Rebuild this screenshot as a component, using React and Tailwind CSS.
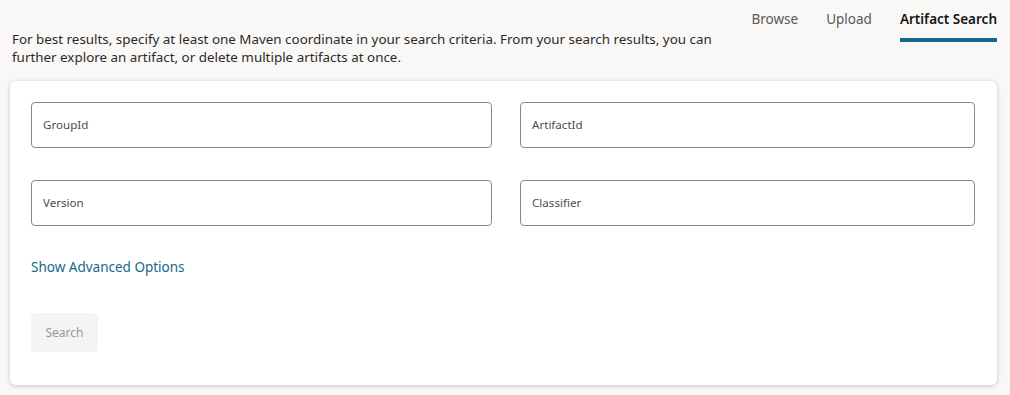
import React from "react";

function Field({ label }) {
  return (
    <div className="h-[46px] rounded-[4px] border border-[#8a8886] bg-white flex items-center px-[11px]">
      <span className="text-[11.6px] text-[#4d4b49]">{label}</span>
    </div>
  );
}

export default function App() {
  return (
    <div className="w-[1010px] h-[395px] bg-[#f9f8f7] overflow-hidden text-[#161513]" style={{ fontFamily: '"Noto Sans", "Open Sans", sans-serif' }}>
      <div className="flex justify-between">
        <p className="pl-[12px] pt-[30px] w-[740px] text-[13.4px] leading-[18px] text-[#2c2a28]">
          For best results, specify at least one Maven coordinate in your search criteria. From your search results, you can further explore an artifact, or delete multiple artifacts at once.
        </p>
        <nav className="flex gap-[28px] pr-[13px] pt-[8px] text-[13.5px]">
          <div className="h-[34px] flex items-start pt-[1px] text-[#5b5955]">Browse</div>
          <div className="h-[34px] flex items-start pt-[1px] text-[#5b5955]">Upload</div>
          <div className="h-[34px] flex flex-col items-stretch">
            <span className="pt-[1px] font-semibold text-[#161513]">Artifact Search</span>
            <span className="mt-auto h-[4px] bg-[#13698d]" />
          </div>
        </nav>
      </div>
      <div className="mx-[10px] mt-[15px] w-[987px] h-[304px] bg-white rounded-[6px] shadow-[0_1px_5px_rgba(0,0,0,0.2)] pl-[21px] pt-[21px]">
        <div className="grid grid-cols-[461px_455px] gap-x-[28px] gap-y-[32px]">
          <Field label="GroupId" />
          <Field label="ArtifactId" />
          <Field label="Version" />
          <Field label="Classifier" />
        </div>
        <div className="mt-[32px] text-[13.5px] text-[#13698d] leading-[19px]">Show Advanced Options</div>
        <button className="mt-[36px] h-[39px] w-[67px] rounded-[4px] bg-[#f4f4f3] text-[12px] text-[#9a9794]">Search</button>
      </div>
    </div>
  );
}
